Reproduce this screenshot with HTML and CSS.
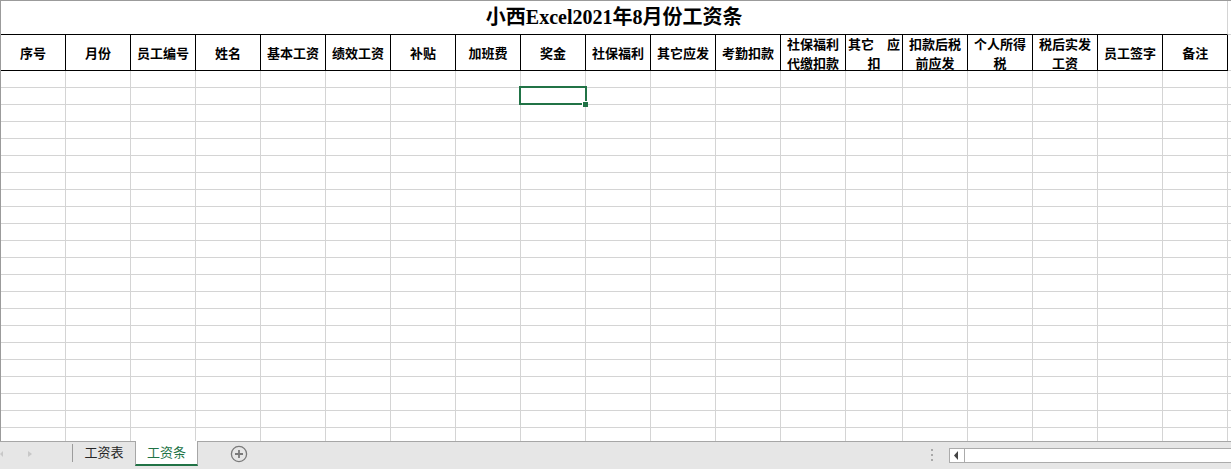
FILE: index.html
```html
<!DOCTYPE html>
<html lang="zh-CN">
  <head>
    <meta charset="utf-8">
    <title>工资条</title>
    <link rel="stylesheet" href="styles.css">
  </head>
  <body>
    <div class="book">
      <div class="sheet">
        <span class="mark-col"></span>
        <span class="mark-row"></span>
        <table class="grid">
          <colgroup>
            <col span="13" class="w">
            <col class="narrow">
            <col span="6" class="w">
          </colgroup>
          <tr class="title"><td colspan="19">小西Excel2021年8月份工资条</td><td></td></tr>
          <tr class="head">
            <th><div class="lbl">序号</div></th>
            <th><div class="lbl">月份</div></th>
            <th><div class="lbl">员工编号</div></th>
            <th><div class="lbl">姓名</div></th>
            <th><div class="lbl">基本工资</div></th>
            <th><div class="lbl">绩效工资</div></th>
            <th><div class="lbl">补贴</div></th>
            <th><div class="lbl">加班费</div></th>
            <th><div class="lbl">奖金</div></th>
            <th><div class="lbl">社保福利</div></th>
            <th><div class="lbl">其它应发</div></th>
            <th><div class="lbl">考勤扣款</div></th>
            <th><div class="lbl">社保福利代缴扣款</div></th>
            <th><div class="lbl">其它　应扣</div></th>
            <th><div class="lbl">扣款后税前应发</div></th>
            <th><div class="lbl">个人所得税</div></th>
            <th><div class="lbl">税后实发工资</div></th>
            <th><div class="lbl">员工签字</div></th>
            <th><div class="lbl">备注</div></th>
            <td></td>
          </tr>
          <tr><td></td><td></td><td></td><td></td><td></td><td></td><td></td><td></td><td></td><td></td><td></td><td></td><td></td><td></td><td></td><td></td><td></td><td></td><td></td><td></td></tr>
          <tr><td></td><td></td><td></td><td></td><td></td><td></td><td></td><td></td><td class="active"><div class="sel"><i class="handle"></i></div></td><td></td><td></td><td></td><td></td><td></td><td></td><td></td><td></td><td></td><td></td><td></td></tr>
          <tr><td></td><td></td><td></td><td></td><td></td><td></td><td></td><td></td><td></td><td></td><td></td><td></td><td></td><td></td><td></td><td></td><td></td><td></td><td></td><td></td></tr>
          <tr><td></td><td></td><td></td><td></td><td></td><td></td><td></td><td></td><td></td><td></td><td></td><td></td><td></td><td></td><td></td><td></td><td></td><td></td><td></td><td></td></tr>
          <tr><td></td><td></td><td></td><td></td><td></td><td></td><td></td><td></td><td></td><td></td><td></td><td></td><td></td><td></td><td></td><td></td><td></td><td></td><td></td><td></td></tr>
          <tr><td></td><td></td><td></td><td></td><td></td><td></td><td></td><td></td><td></td><td></td><td></td><td></td><td></td><td></td><td></td><td></td><td></td><td></td><td></td><td></td></tr>
          <tr><td></td><td></td><td></td><td></td><td></td><td></td><td></td><td></td><td></td><td></td><td></td><td></td><td></td><td></td><td></td><td></td><td></td><td></td><td></td><td></td></tr>
          <tr><td></td><td></td><td></td><td></td><td></td><td></td><td></td><td></td><td></td><td></td><td></td><td></td><td></td><td></td><td></td><td></td><td></td><td></td><td></td><td></td></tr>
          <tr><td></td><td></td><td></td><td></td><td></td><td></td><td></td><td></td><td></td><td></td><td></td><td></td><td></td><td></td><td></td><td></td><td></td><td></td><td></td><td></td></tr>
          <tr><td></td><td></td><td></td><td></td><td></td><td></td><td></td><td></td><td></td><td></td><td></td><td></td><td></td><td></td><td></td><td></td><td></td><td></td><td></td><td></td></tr>
          <tr><td></td><td></td><td></td><td></td><td></td><td></td><td></td><td></td><td></td><td></td><td></td><td></td><td></td><td></td><td></td><td></td><td></td><td></td><td></td><td></td></tr>
          <tr><td></td><td></td><td></td><td></td><td></td><td></td><td></td><td></td><td></td><td></td><td></td><td></td><td></td><td></td><td></td><td></td><td></td><td></td><td></td><td></td></tr>
          <tr><td></td><td></td><td></td><td></td><td></td><td></td><td></td><td></td><td></td><td></td><td></td><td></td><td></td><td></td><td></td><td></td><td></td><td></td><td></td><td></td></tr>
          <tr><td></td><td></td><td></td><td></td><td></td><td></td><td></td><td></td><td></td><td></td><td></td><td></td><td></td><td></td><td></td><td></td><td></td><td></td><td></td><td></td></tr>
          <tr><td></td><td></td><td></td><td></td><td></td><td></td><td></td><td></td><td></td><td></td><td></td><td></td><td></td><td></td><td></td><td></td><td></td><td></td><td></td><td></td></tr>
          <tr><td></td><td></td><td></td><td></td><td></td><td></td><td></td><td></td><td></td><td></td><td></td><td></td><td></td><td></td><td></td><td></td><td></td><td></td><td></td><td></td></tr>
          <tr><td></td><td></td><td></td><td></td><td></td><td></td><td></td><td></td><td></td><td></td><td></td><td></td><td></td><td></td><td></td><td></td><td></td><td></td><td></td><td></td></tr>
          <tr><td></td><td></td><td></td><td></td><td></td><td></td><td></td><td></td><td></td><td></td><td></td><td></td><td></td><td></td><td></td><td></td><td></td><td></td><td></td><td></td></tr>
          <tr><td></td><td></td><td></td><td></td><td></td><td></td><td></td><td></td><td></td><td></td><td></td><td></td><td></td><td></td><td></td><td></td><td></td><td></td><td></td><td></td></tr>
          <tr><td></td><td></td><td></td><td></td><td></td><td></td><td></td><td></td><td></td><td></td><td></td><td></td><td></td><td></td><td></td><td></td><td></td><td></td><td></td><td></td></tr>
          <tr><td></td><td></td><td></td><td></td><td></td><td></td><td></td><td></td><td></td><td></td><td></td><td></td><td></td><td></td><td></td><td></td><td></td><td></td><td></td><td></td></tr>
          <tr><td></td><td></td><td></td><td></td><td></td><td></td><td></td><td></td><td></td><td></td><td></td><td></td><td></td><td></td><td></td><td></td><td></td><td></td><td></td><td></td></tr>
        </table>
      </div>
      <div class="tabbar">
        <div class="nav">
          <svg width="72" height="26" viewBox="0 0 72 26">
            <polygon points="3,9 0,12 3,15" fill="#c8c8c8"/>
            <polygon points="28,9 32,12 28,15" fill="#c8c8c8"/>
          </svg>
        </div>
        <div class="sep"></div>
        <div class="tab">工资表</div>
        <div class="tab on">工资条</div>
        <div class="add">
          <svg width="18" height="18" viewBox="0 0 18 18">
            <circle cx="9" cy="9" r="7.6" fill="none" stroke="#7a7a7a" stroke-width="1.3"/>
            <path d="M9 5v8M5 9h8" stroke="#7a7a7a" stroke-width="1.8"/>
          </svg>
        </div>
        <div class="grip">
          <svg width="3" height="14" viewBox="0 0 3 14">
            <rect x="0" y="0" width="2" height="2" fill="#a8a8a8"/>
            <rect x="0" y="5" width="2" height="2" fill="#a8a8a8"/>
            <rect x="0" y="10" width="2" height="2" fill="#a8a8a8"/>
          </svg>
        </div>
        <div class="hscroll">
          <div class="arrow">
            <svg width="14" height="13" viewBox="0 0 14 13">
              <polygon points="8,2 4,6.5 8,11" fill="#444"/>
            </svg>
          </div>
        </div>
      </div>
    </div>
  </body>
</html>
```
FILE: styles.css
```css
* {
  box-sizing: border-box;
}
html, body {
  margin: 0;
}
body {
  width: 1231px;
  height: 469px;
  overflow: hidden;
  background-color: #fff;
  font-family: "Noto Sans CJK SC", sans-serif;
  color: #000;
}
.book {
  display: flex;
  flex-direction: column;
  height: 469px;
  overflow: hidden;
}
.sheet {
  position: relative;
  flex: none;
  height: 441px;
  overflow: hidden;
  border-top: 1px solid #9b9b9b;
  border-left: 1px solid #9b9b9b;
}
.mark-col {
  position: absolute;
  top: -1px;
  left: 519px;
  width: 65px;
  height: 1px;
  background-color: #217346;
  z-index: 2;
}
.mark-row {
  position: absolute;
  top: 87px;
  left: -1px;
  width: 1px;
  height: 16px;
  background-color: #217346;
  z-index: 2;
}
.grid {
  table-layout: fixed;
  border-collapse: separate;
  border-spacing: 0;
  width: 1292px;
  & col.w {
    width: 65px;
  }
  & col.narrow {
    width: 57px;
  }
  & tr {
    height: 17px;
  }
  & td, & th {
    padding: 0;
    border-right: 1px solid #d4d4d4;
    border-bottom: 1px solid #d4d4d4;
  }
  & tr.title {
    height: 34px;
    & td {
      border-bottom-color: #000;
      font-family: "Liberation Serif", "Noto Sans CJK SC", serif;
      font-size: 20px;
      font-weight: bold;
      line-height: 33px;
      text-align: center;
      white-space: nowrap;
    }
    & td:last-child {
      border-bottom-color: #d4d4d4;
    }
  }
  & tr.head {
    height: 36px;
    & th {
      border-right-color: #000;
      border-bottom-color: #000;
      font-size: 13px;
      font-weight: bold;
    }
  }
}
.lbl {
  display: flex;
  align-items: center;
  justify-content: center;
  height: 35px;
  line-height: 19px;
  text-align: center;
}
td.active {
  position: relative;
}
.sel {
  position: absolute;
  left: -2px;
  top: -2px;
  right: -2px;
  bottom: -1px;
  border: 2px solid #217346;
  z-index: 1;
}
.handle {
  position: absolute;
  right: -3px;
  bottom: -4px;
  width: 6px;
  height: 6px;
  background-color: #217346;
  border-left: 1px solid #fff;
  border-top: 1px solid #fff;
}
.tabbar {
  flex: 1;
  display: flex;
  align-items: flex-start;
  background-color: #e6e6e6;
  border-top: 1px solid #a6a6a6;
  font-size: 13px;
}
.nav {
  width: 72px;
  height: 26px;
  & svg {
    display: block;
  }
}
.sep {
  width: 1px;
  height: 18px;
  margin-top: 2px;
  background-color: #9c9c9c;
}
.tab {
  width: 62px;
  height: 25px;
  margin-top: -1px;
  line-height: 22px;
  text-align: center;
  color: #262626;
  &.on {
    width: 63px;
    background-color: #fff;
    color: #217346;
    border-left: 1px solid #a6a6a6;
    border-right: 1px solid #a6a6a6;
    border-bottom: 2px solid #217346;
  }
}
.add {
  margin-left: 32px;
  margin-top: 3px;
  & svg {
    display: block;
  }
}
.grip {
  margin-left: auto;
  margin-top: 7px;
  & svg {
    display: block;
  }
}
.hscroll {
  width: 290px;
  height: 15px;
  margin-top: 6px;
  margin-left: 15px;
  margin-right: -8px;
  background-color: #fff;
  border: 1px solid #ababab;
}
.arrow {
  width: 15px;
  height: 13px;
  border-right: 1px solid #ababab;
  & svg {
    display: block;
  }
}
```
